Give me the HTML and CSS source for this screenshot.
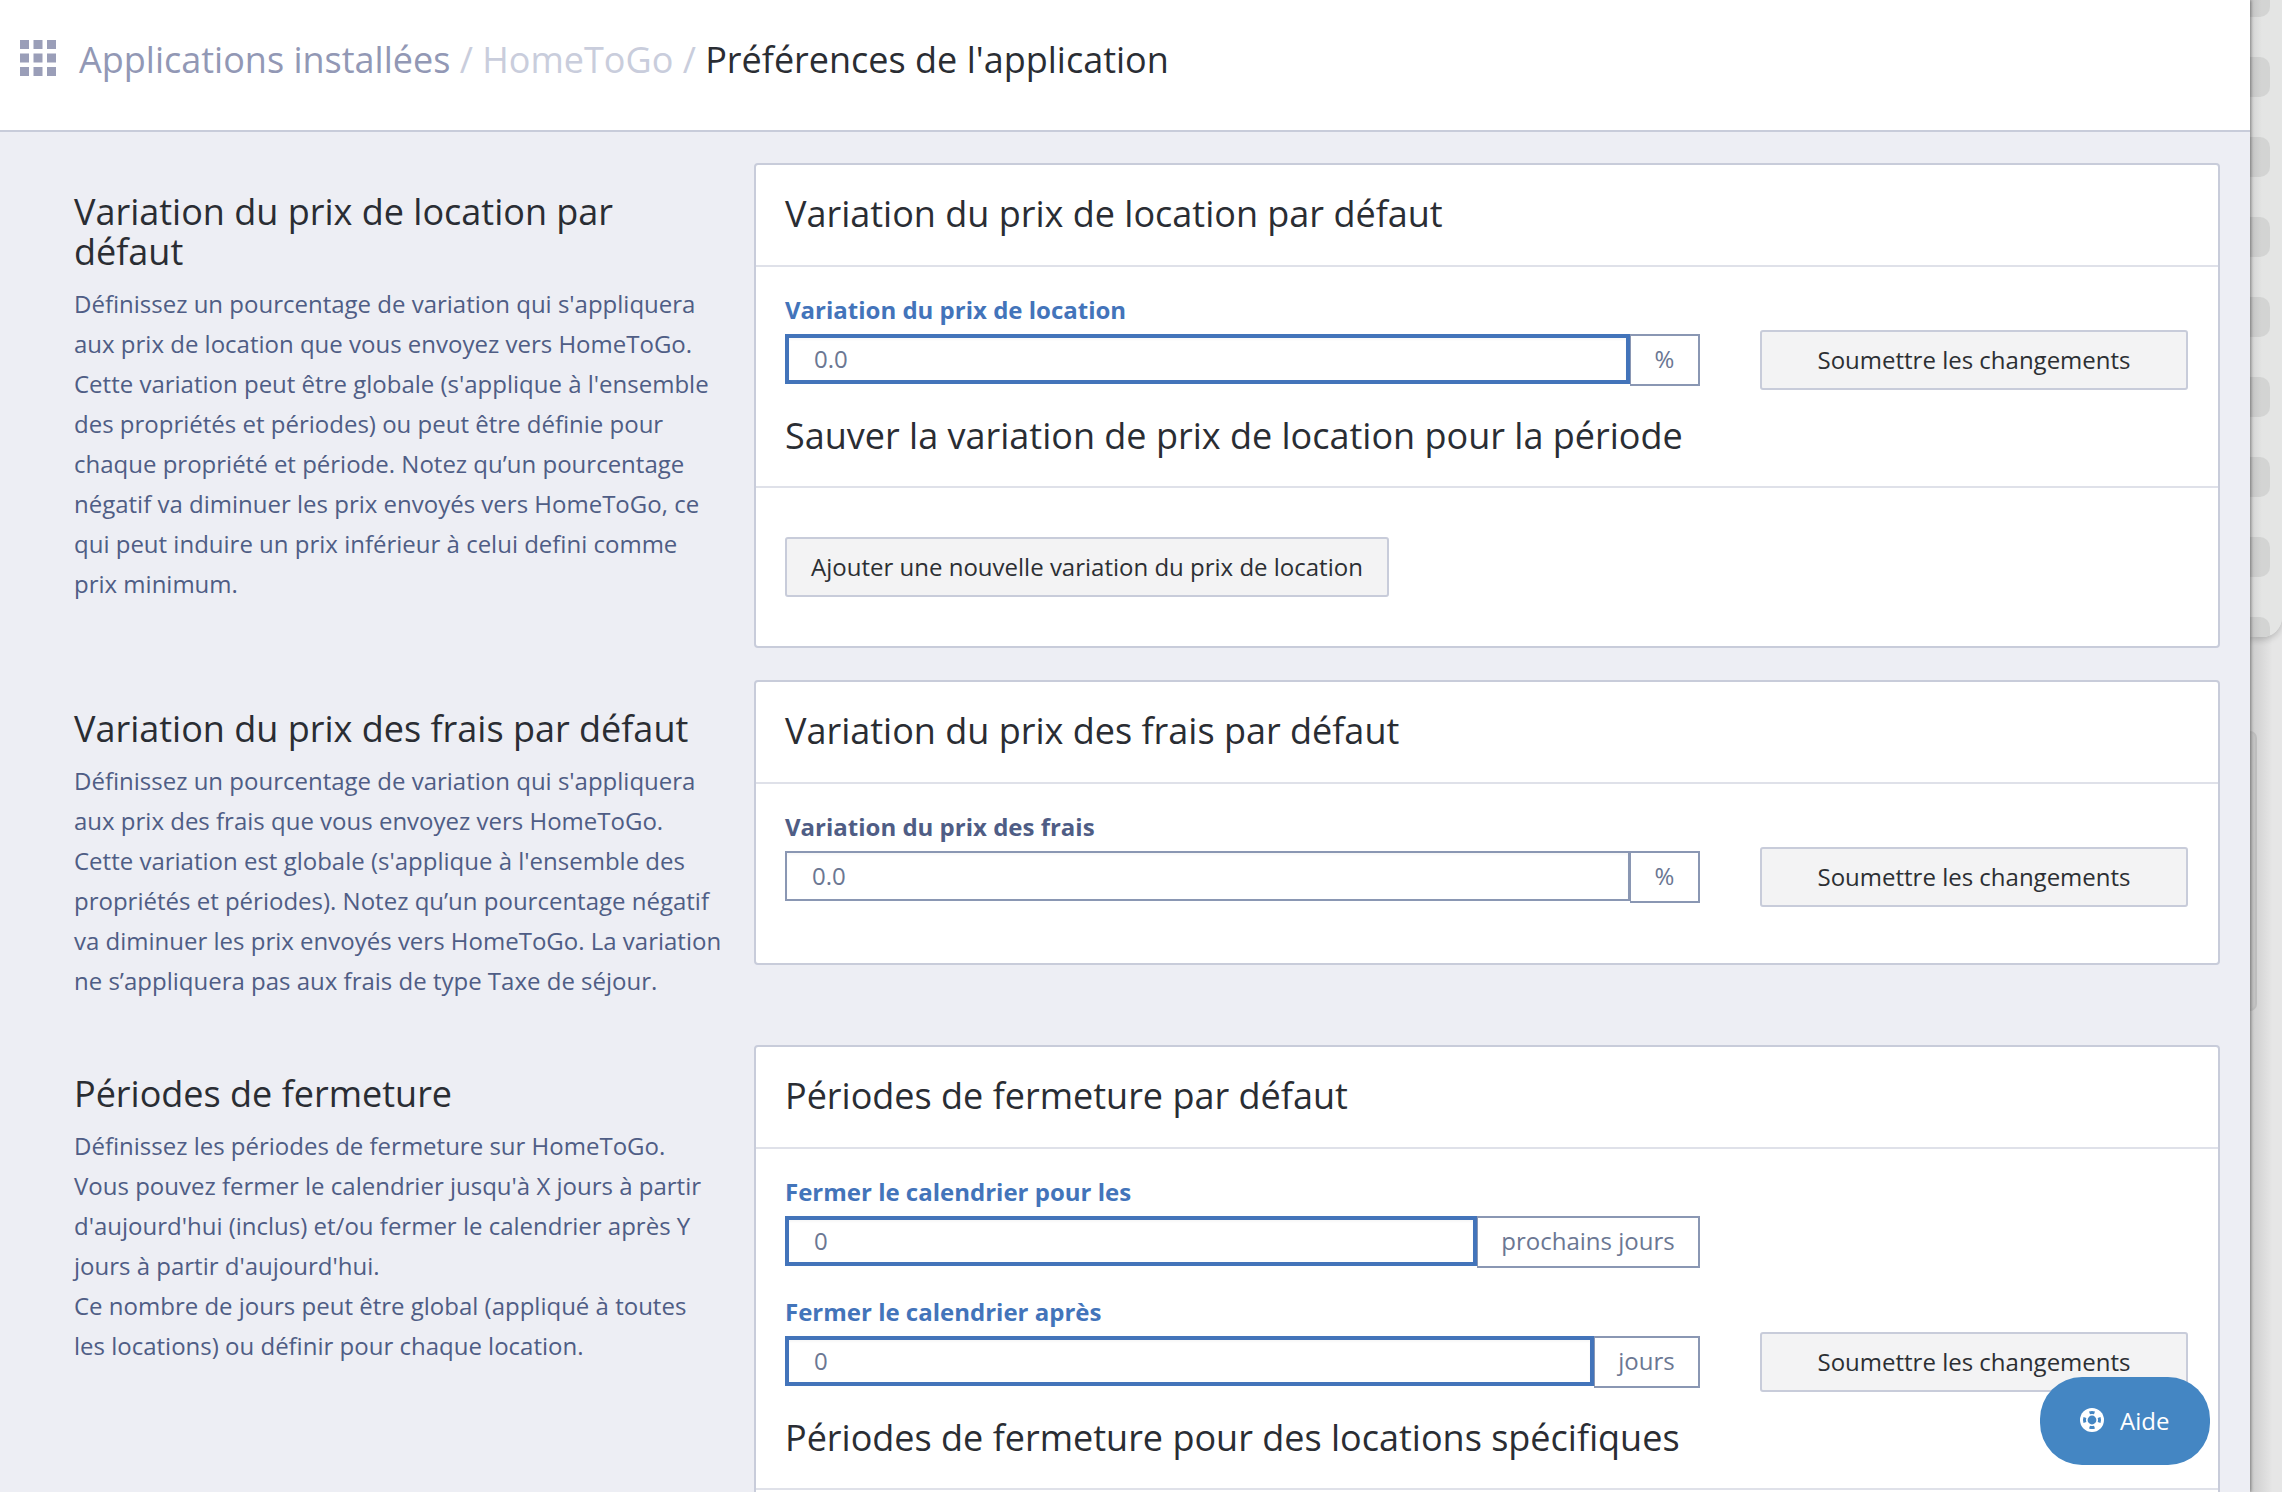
FILE: index.html
```html
<!DOCTYPE html>
<html lang="fr">
<head>
<meta charset="utf-8">
<title>Préférences de l'application</title>
<link rel="stylesheet" href="styles.css">
</head>
<body>
<div class="window">
  <main class="panel">
    <header class="topbar">
      <svg class="apps" width="36" height="36" viewBox="0 0 36 36" aria-hidden="true"><path d="M0 0h9v9H0zM13.500 0h9v9h-9zM27 0h9v9h-9zM0 13.500h9v9H0zM13.500 13.500h9v9h-9zM27 13.500h9v9h-9zM0 27h9v9H0zM13.500 27h9v9h-9zM27 27h9v9h-9z"/></svg>
      <nav class="crumbs"><span class="crumb-root">Applications installées</span><span class="crumb-sep"> / </span><span class="crumb-app">HomeToGo</span><span class="crumb-sep"> / </span><span class="crumb-current">Préférences de l'application</span></nav>
    </header>

    <div class="content">
      <section class="section">
        <div class="intro">
          <h2 class="intro-title">Variation du prix de location par défaut</h2>
          <p class="intro-text">Définissez un pourcentage de variation qui s'appliquera aux prix de location que vous envoyez vers HomeToGo. Cette variation peut être globale (s'applique à l'ensemble des propriétés et périodes) ou peut être définie pour chaque propriété et période. Notez qu’un pourcentage négatif va diminuer les prix envoyés vers HomeToGo, ce qui peut induire un prix inférieur à celui defini comme prix minimum.</p>
        </div>
        <div class="card">
          <h3 class="card-title">Variation du prix de location par défaut</h3>
          <div class="card-body">
            <div class="form-row">
              <div class="fields">
                <div class="field focused">
                  <label class="label">Variation du prix de location</label>
                  <div class="input-group"><div class="input">0.0</div><div class="addon addon-pct">%</div></div>
                </div>
              </div>
              <button class="btn btn-submit">Soumettre les changements</button>
            </div>
          </div>
          <h3 class="card-title">Sauver la variation de prix de location pour la période</h3>
          <div class="card-body card-body-action">
            <button class="btn btn-add">Ajouter une nouvelle variation du prix de location</button>
          </div>
        </div>
      </section>

      <section class="section">
        <div class="intro">
          <h2 class="intro-title">Variation du prix des frais par défaut</h2>
          <p class="intro-text">Définissez un pourcentage de variation qui s'appliquera aux prix des frais que vous envoyez vers HomeToGo. Cette variation est globale (s'applique à l'ensemble des propriétés et périodes). Notez qu’un pourcentage négatif va diminuer les prix envoyés vers HomeToGo. La variation ne s’appliquera pas aux frais de type Taxe de séjour.</p>
        </div>
        <div class="card">
          <h3 class="card-title">Variation du prix des frais par défaut</h3>
          <div class="card-body card-body-single">
            <div class="form-row">
              <div class="fields">
                <div class="field">
                  <label class="label">Variation du prix des frais</label>
                  <div class="input-group"><div class="input">0.0</div><div class="addon addon-pct">%</div></div>
                </div>
              </div>
              <button class="btn btn-submit">Soumettre les changements</button>
            </div>
          </div>
        </div>
      </section>

      <section class="section">
        <div class="intro">
          <h2 class="intro-title">Périodes de fermeture</h2>
          <p class="intro-text">Définissez les périodes de fermeture sur HomeToGo. Vous pouvez fermer le calendrier jusqu'à X jours à partir d'aujourd'hui (inclus) et/ou fermer le calendrier après Y jours à partir d'aujourd'hui.<br>Ce nombre de jours peut être global (appliqué à toutes les locations) ou définir pour chaque location.</p>
        </div>
        <div class="card">
          <h3 class="card-title">Périodes de fermeture par défaut</h3>
          <div class="card-body">
            <div class="form-row">
              <div class="fields">
                <div class="field focused">
                  <label class="label">Fermer le calendrier pour les</label>
                  <div class="input-group"><div class="input">0</div><div class="addon addon-next">prochains jours</div></div>
                </div>
                <div class="field focused">
                  <label class="label">Fermer le calendrier après</label>
                  <div class="input-group"><div class="input">0</div><div class="addon addon-days">jours</div></div>
                </div>
              </div>
              <button class="btn btn-submit">Soumettre les changements</button>
            </div>
          </div>
          <h3 class="card-title">Périodes de fermeture pour des locations spécifiques</h3>
          <div class="card-body card-body-action"></div>
        </div>
      </section>
    </div>

    <button class="help">
      <svg class="help-icon" width="24" height="24" viewBox="0 0 24 24" aria-hidden="true"><circle cx="12" cy="12" r="12" fill="#fff"/><circle cx="12" cy="12" r="4.400" fill="#4486c3"/><path d="M9 3.500a9 9 0 0 1 6 0l-1 2.800a6 6 0 0 0-4 0zM9 20.500a9 9 0 0 0 6 0l-1-2.800a6 6 0 0 1-4 0zM3.500 9a9 9 0 0 0 0 6l2.800-1a6 6 0 0 1 0-4zM20.500 9a9 9 0 0 1 0 6l-2.800-1a6 6 0 0 0 0-4z" fill="#4486c3"/></svg>
      <span>Aide</span>
    </button>
  </main>

  <aside class="backdrop">
    <div class="backdrop-top">
      <span class="key key-first"></span><span class="key"></span><span class="key"></span><span class="key"></span><span class="key"></span><span class="key"></span><span class="key"></span><span class="key"></span><span class="key key-last"></span>
    </div>
    <div class="backdrop-frame"></div>
  </aside>
</div>
</body>
</html>
```
FILE: styles.css
```css
* { box-sizing: border-box; }
html, body { margin: 0; height: 100%; }
body {
  font-family: "Open Sans", "Noto Sans", sans-serif;
  overflow: hidden;
  background: #e2e2e2;
}
.window { display: flex; width: 2282px; height: 1492px; overflow: hidden; }

/* main panel */
.panel {
  position: relative;
  flex: 0 0 2250px;
  height: 1492px;
  overflow: hidden;
  background: #edeef4;
  box-shadow: 1px 0 3px rgba(0, 0, 0, .4);
  z-index: 1;
}
.topbar {
  display: flex;
  align-items: center;
  gap: 23px;
  height: 132px;
  padding: 0 0 10px 20px;
  background: #fff;
  border-bottom: 2px solid #c8ccda;
}
.apps { fill: #9a9eb8; flex: none; margin-top: -4px; }
.crumbs { font-size: 36px; line-height: 48px; white-space: pre; }
.crumb-root { color: #9298b5; }
.crumb-sep, .crumb-app { color: #c9cddc; }
.crumb-current { color: #2a2d33; }

.content { padding: 31px 30px 0 74px; }
.section { display: flex; align-items: flex-start; margin-bottom: 32px; }
.intro { flex: 0 0 680px; padding: 29px 0 12px 0; }
.intro-title {
  margin: 0 0 12px;
  width: 620px;
  font-size: 36px;
  line-height: 40px;
  font-weight: 400;
  color: #2a2d33;
}
.intro-text {
  margin: 0;
  width: 648px;
  font-size: 24px;
  line-height: 40px;
  color: #4f5d85;
}

/* cards */
.card {
  flex: 0 0 1466px;
  background: #fff;
  border: 2px solid #c8ccda;
  border-radius: 4px;
}
.card-title {
  margin: 0;
  height: 102px;
  padding: 0 29px 4px;
  display: flex;
  align-items: center;
  font-size: 36px;
  font-weight: 400;
  color: #2a2d33;
  border-bottom: 2px solid #dfe1e9;
}
.card-body + .card-title { padding-bottom: 2px; }
.card-body { padding: 27px 30px 0 29px; }
.card-body-single { padding-bottom: 60px; }
.card-body-action { padding-top: 49px; padding-bottom: 49px; min-height: 158px; }

.form-row { display: flex; align-items: flex-end; gap: 60px; }
.fields { flex: 0 0 915px; display: flex; flex-direction: column; gap: 28px; }
.label {
  display: block;
  margin-bottom: 8px;
  font-size: 24px;
  line-height: 32px;
  font-weight: 700;
  color: #4f5d85;
}
.focused .label { color: #4374ba; }
.input-group { display: flex; align-items: flex-start; }
.input {
  flex: 1;
  height: 50px;
  padding-left: 25px;
  background: #fff;
  border: 2px solid #8a97b3;
  box-shadow: inset 0 2px 2px rgba(0, 0, 0, .03);
  font-size: 24px;
  line-height: 46px;
  color: #6b7793;
}
.focused .input { border: 4px solid #4374ba; padding-left: 25px; line-height: 42px; }
.addon {
  flex: none;
  height: 52px;
  border: 2px solid #8a97b3;
  border-left-width: 1px;
  font-size: 24px;
  line-height: 46px;
  text-align: center;
  color: #6b7793;
}
.addon-pct { width: 70px; }
.addon-next { width: 223px; }
.addon-days { width: 106px; }

.btn {
  height: 60px;
  font-family: inherit;
  font-size: 24px;
  line-height: 54px;
  color: #2c2f33;
  background: #f3f3f4;
  border: 2px solid #c8ccda;
  border-radius: 3px;
  padding: 0 0 1px;
}
.btn-submit { flex: 0 0 428px; margin-bottom: -4px; }
.btn-add { width: 604px; display: block; }

/* floating help */
.help {
  position: absolute;
  left: 2040px;
  top: 1377px;
  width: 170px;
  height: 88px;
  display: flex;
  align-items: center;
  gap: 16px;
  padding: 0 0 2px 40px;
  border: 0;
  border-radius: 42px;
  background: #4486c3;
  color: #fff;
  font-family: inherit;
  font-size: 24px;
}

/* blurred desktop behind the panel */
.backdrop {
  flex: 0 0 32px;
  height: 1492px;
  background: linear-gradient(90deg, #cbcbcb, #e6e6e6 70%);
}
.backdrop-top {
  height: 637px;
  display: flex;
  flex-direction: column;
  gap: 40px;
  overflow: hidden;
  background: linear-gradient(90deg, #d2d2d2, #e4e5e4 12px);
  border-radius: 0 0 20px 0;
  box-shadow: 0 3px 6px rgba(0, 0, 0, .18);
}
.key {
  flex: none;
  width: 20px;
  height: 40px;
  background: rgba(0, 0, 0, .07);
  border-radius: 0 10px 10px 0;
}
.key-first { height: 17px; border-radius: 0 0 10px 0; }
.backdrop-frame {
  width: 7px;
  height: 280px;
  margin-top: 94px;
  background: rgba(0, 0, 0, .06);
  border: 2px solid #bdbdbd;
  border-left: 0;
  border-radius: 0 8px 8px 0;
}
```
